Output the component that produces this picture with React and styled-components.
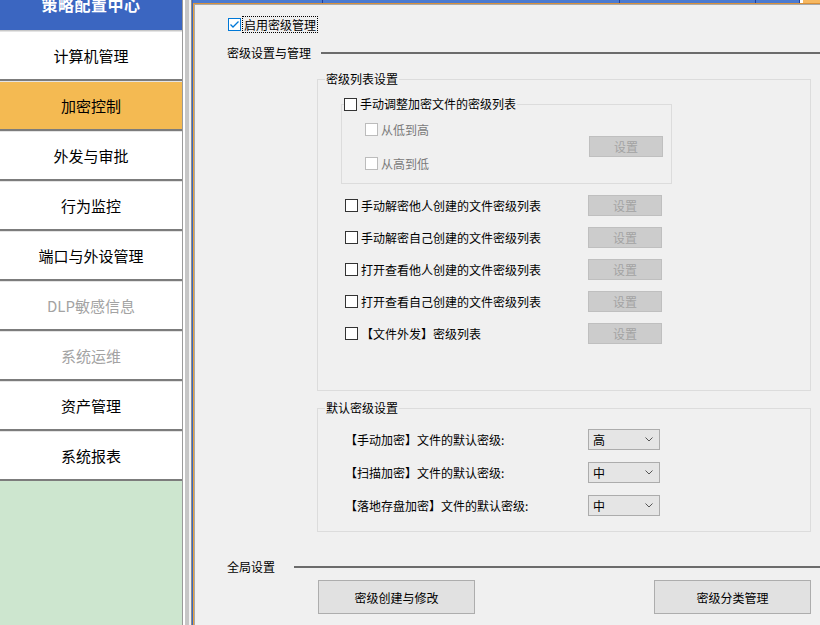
import React from "react";
import styled, { createGlobalStyle } from "styled-components";

const GlobalStyle = createGlobalStyle`
  *, *::before, *::after { box-sizing: border-box; }
  html, body { margin: 0; padding: 0; }
  body {
    font-family: "Noto Sans CJK SC", "Liberation Sans", sans-serif;
    font-size: 12px;
    color: #000;
    background: #f0f0f0;
    overflow: hidden;
  }
  #root { height: 625px; }
`;

const Frame = styled.div`
  display: flex;
  width: 820px;
  height: 625px;
  overflow: hidden;
`;

// left navigation
const Sidebar = styled.nav`
  width: 182px;
  flex-shrink: 0;
  display: flex;
  flex-direction: column;
  background: #cde6cf;
`;

const SidebarHeader = styled.div`
  height: 31px;
  flex-shrink: 0;
  border-bottom: 1px solid #c8c8c8;
  background: #3b66c1;
  color: #fff;
  font-size: 16px;
  font-weight: bold;
  line-height: 9px;
  text-align: center;
  overflow: hidden;
  letter-spacing: 0.5px;
`;

const MenuItem = styled.div`
  height: 50px;
  flex-shrink: 0;
  border-top: 1px solid #e4e4e4;
  border-bottom: 2px solid #7c7c7c;
  background: ${(p) => (p.$active ? "#f4ba52" : "#fff")};
  color: ${(p) => (p.$disabled ? "#a3a3a3" : "#000")};
  font-size: 15px;
  display: flex;
  align-items: center;
  justify-content: center;
`;

const Splitter = styled.div`
  width: 11px;
  flex-shrink: 0;
  background: linear-gradient(
    to right,
    #9a9a9a 0 1px,
    #fff 1px 3px,
    #c6c6c6 3px 7px,
    #f2f2f2 7px 9px,
    #8c8c8c 9px 10px,
    #3a66c0 10px 11px
  );
`;

// right panel
const Panel = styled.main`
  flex: 1;
  display: flex;
  flex-direction: column;
  min-width: 0;
`;

const TopStrip = styled.div`
  height: 3px;
  flex-shrink: 0;
  display: flex;
`;

const Tab = styled.div`
  width: ${(p) => p.$w}px;
  background: #4b7ad0;
  border-right: 1px solid #1e3f99;
`;

const TabGap = styled.div`
  width: 3px;
  background: #fff;
`;

const TabFill = styled.div`
  flex: 1;
  background: #f7b860;
`;

const Body = styled.div`
  flex: 1;
  display: flex;
  flex-direction: column;
  border-top: 1px solid #d8903a;
  border-left: 1px solid #e8a23c;
  box-shadow: inset 1px 1px 0 #a8a8a8;
  padding: 11px 0 0 33px;
`;

const EnableRow = styled.div`
  display: flex;
  align-items: center;
  height: 18px;
  margin-left: 1px;
  gap: 1px;
`;

const FocusText = styled.span`
  border: 1px dotted #000;
  padding: 0 1px;
  line-height: 15px;
`;

const Heading = styled.div`
  display: flex;
  align-items: center;
  height: 18px;
  margin-top: ${(p) => p.$mt}px;
  line-height: 18px;
`;

const Rule = styled.div`
  flex: 1;
  height: 2px;
  background: #6b6b6b;
  margin-left: ${(p) => p.$gap}px;
`;

const Group = styled.fieldset`
  margin: ${(p) => p.$mt}px 9px 0 90px;
  padding: 0 0 ${(p) => p.$pb}px 0;
  border: 1px solid #dcdcdc;
  min-width: 0;
`;

const Legend = styled.legend`
  margin-left: 7px;
  padding: 0 1px;
  line-height: 16px;
  font-size: 12px;
`;

const SubGroup = styled.fieldset`
  width: 331px;
  margin: 8px 0 0 23px;
  padding: 0;
  border: 1px solid #dcdcdc;
  min-width: 0;
`;

const SubLegend = styled.legend`
  margin-left: 2px;
  padding: 0 1px 0 0;
  line-height: 16px;
  display: flex;
`;

const SubBody = styled.div`
  display: flex;
  align-items: center;
  padding: 7px 8px 11px 23px;
`;

const CheckColumn = styled.div`
  display: flex;
  flex-direction: column;
  gap: 16px;
`;

const CheckLabel = styled.label`
  display: inline-flex;
  align-items: center;
  gap: 3px;
  height: 18px;
  color: ${(p) => (p.$disabled ? "#7a7a7a" : "#000")};
  white-space: nowrap;
`;

const Box = styled.span`
  width: 13px;
  height: 13px;
  flex-shrink: 0;
  border: 1px solid
    ${(p) => (p.$checked ? "#0078d7" : p.$disabled ? "#bcbcbc" : "#333")};
  background: #fff;
  display: inline-flex;
  align-items: center;
  justify-content: center;
`;

const OptionRow = styled.div`
  display: flex;
  align-items: center;
  justify-content: space-between;
  width: 317px;
  height: 20px;
  margin: ${(p) => p.$mt}px 0 0 27px;
`;

const SetButton = styled.button`
  width: 74px;
  height: 21px;
  flex-shrink: 0;
  margin-left: auto;
  padding: 0;
  background: #cccccc;
  border: 1px solid #bfbfbf;
  color: #a3a3a3;
  font-family: inherit;
  font-size: 12px;
  line-height: 19px;
`;

const DefaultRow = styled.div`
  display: flex;
  align-items: center;
  justify-content: space-between;
  width: 315px;
  height: 21px;
  margin: ${(p) => p.$mt}px 0 0 27px;
`;

const Select = styled.div`
  width: 72px;
  height: 21px;
  border: 1px solid #acacac;
  background: #e5e5e5;
  display: flex;
  align-items: center;
  justify-content: space-between;
  padding: 0 6px 0 4px;
  font-size: 12px;
`;

const ButtonRow = styled.div`
  display: flex;
  justify-content: space-between;
  margin: 4px 9px 0 91px;
`;

const BigButton = styled.button`
  width: 157px;
  height: 34px;
  padding: 0;
  background: #e1e1e1;
  border: 1px solid #adadad;
  font-family: inherit;
  font-size: 12px;
  color: #000;
`;

const Check = ({ label, checked, disabled }) => (
  <CheckLabel $disabled={disabled}>
    <Box $checked={checked} $disabled={disabled}>
      {checked && (
        <svg width="11" height="11" viewBox="0 0 11 11">
          <path d="M1.5 5.5 L4 8 L9.5 2.5" fill="none" stroke="#0078d7" strokeWidth="1.3" />
        </svg>
      )}
    </Box>
    {label}
  </CheckLabel>
);

const Chevron = () => (
  <svg width="8" height="5" viewBox="0 0 8 5">
    <path d="M0.5 0.5 L4 4 L7.5 0.5" fill="none" stroke="#555" strokeWidth="1" />
  </svg>
);

const menu = [
  { name: "计算机管理" },
  { name: "加密控制", active: true },
  { name: "外发与审批" },
  { name: "行为监控" },
  { name: "端口与外设管理" },
  { name: "DLP敏感信息", disabled: true },
  { name: "系统运维", disabled: true },
  { name: "资产管理" },
  { name: "系统报表" },
];

const lists = [
  "手动解密他人创建的文件密级列表",
  "手动解密自己创建的文件密级列表",
  "打开查看他人创建的文件密级列表",
  "打开查看自己创建的文件密级列表",
  " 【文件外发】密级列表",
];

const defaults = [
  { label: "【手动加密】文件的默认密级:", value: "高" },
  { label: "【扫描加密】文件的默认密级:", value: "中" },
  { label: "【落地存盘加密】文件的默认密级:", value: "中" },
];

const App = () => {
  return (
    <Frame>
      <GlobalStyle />
      <Sidebar>
        <SidebarHeader>策略配置中心</SidebarHeader>
        {menu.map((m) => (
          <MenuItem key={m.name} $active={m.active} $disabled={m.disabled}>
            {m.name}
          </MenuItem>
        ))}
      </Sidebar>
      <Splitter />
      <Panel>
        <TopStrip>
          <Tab $w={130} />
          <Tab $w={297} />
          <Tab $w={136} />
          <Tab $w={44} />
          <TabGap />
          <TabFill />
        </TopStrip>
        <Body>
          <EnableRow>
            <Box $checked>
              <svg width="11" height="11" viewBox="0 0 11 11">
                <path d="M1.5 5.5 L4 8 L9.5 2.5" fill="none" stroke="#0078d7" strokeWidth="1.3" />
              </svg>
            </Box>
            <FocusText>启用密级管理</FocusText>
          </EnableRow>

          <Heading $mt={11}>
            密级设置与管理
            <Rule $gap={10} />
          </Heading>

          <Group $mt={9} $pb={47}>
            <Legend>密级列表设置</Legend>
            <SubGroup>
              <SubLegend>
                <Check label="手动调整加密文件的密级列表" />
              </SubLegend>
              <SubBody>
                <CheckColumn>
                  <Check label="从低到高" disabled />
                  <Check label="从高到低" disabled />
                </CheckColumn>
                <SetButton disabled>设置</SetButton>
              </SubBody>
            </SubGroup>
            {lists.map((l, i) => (
              <OptionRow key={l} $mt={i === 0 ? 11 : 12}>
                <Check label={l} />
                <SetButton disabled>设置</SetButton>
              </OptionRow>
            ))}
          </Group>

          <Group $mt={9} $pb={15}>
            <Legend>默认密级设置</Legend>
            {defaults.map((d, i) => (
              <DefaultRow key={d.label} $mt={i === 0 ? 13 : 12}>
                <span>{d.label}</span>
                <Select>
                  <span>{d.value}</span>
                  <Chevron />
                </Select>
              </DefaultRow>
            ))}
          </Group>

          <Heading $mt={26}>
            全局设置
            <Rule $gap={19} />
          </Heading>

          <ButtonRow>
            <BigButton>密级创建与修改</BigButton>
            <BigButton>密级分类管理</BigButton>
          </ButtonRow>
        </Body>
      </Panel>
    </Frame>
  );
};

export default App;
